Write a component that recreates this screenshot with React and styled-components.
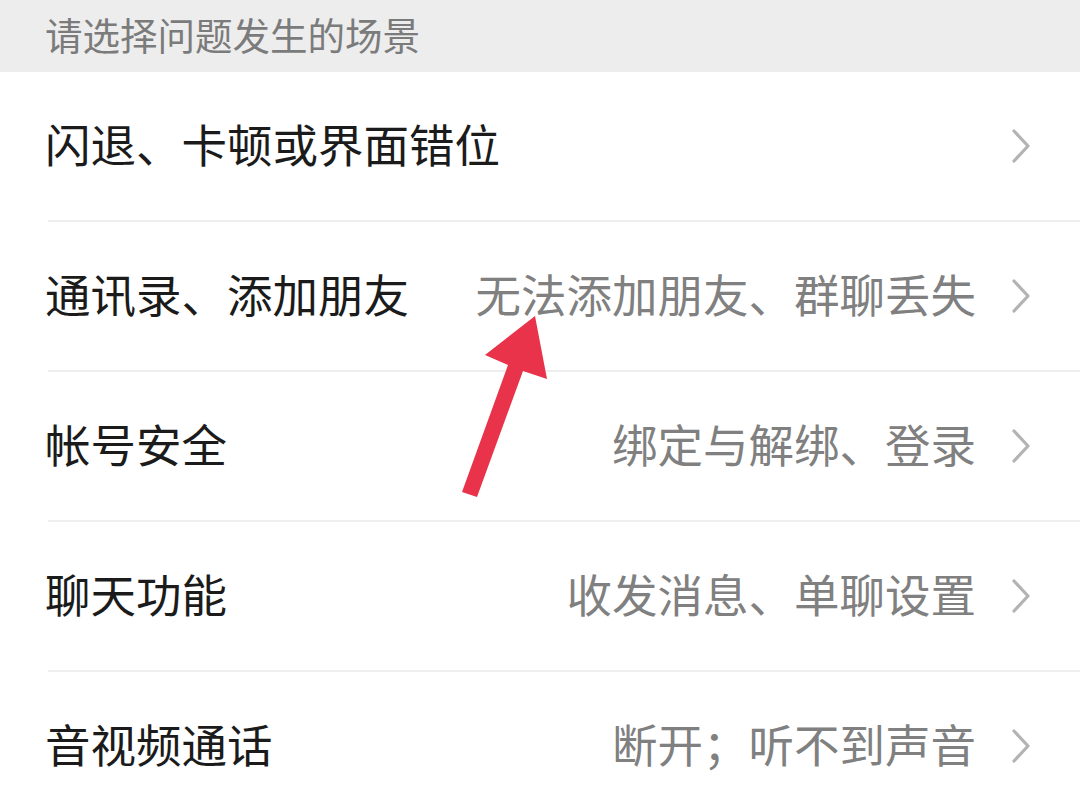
import React from "react";
import styled, { createGlobalStyle } from "styled-components";

const Global = createGlobalStyle`
  html, body { margin: 0; padding: 0; background: #ffffff; overflow: hidden; }
  body { font-family: "Noto Sans CJK SC", "Noto Sans", sans-serif; }
`;

const Page = styled.div`
  position: relative;
  width: 1080px;
  height: 810px;
  overflow: hidden;
  background: #ffffff;
`;

const Header = styled.div`
  height: 72px;
  background: #ededed;
  display: flex;
  align-items: center;
  padding-left: 45px;
  font-size: 37.5px;
  color: #7b7b7b;
  line-height: 1;
  padding-bottom: 4px;
  box-sizing: border-box;
`;

const List = styled.div`
  display: flex;
  flex-direction: column;
`;

const Row = styled.div`
  height: 148px;
  display: flex;
  align-items: center;
  padding: 0 48px 4px 45px;
  box-sizing: border-box;
`;

const Title = styled.span`
  font-size: 45.5px;
  color: #1b1b1b;
  line-height: 1;
  white-space: nowrap;
  flex: 1;
`;

const Detail = styled.span`
  font-size: 45.5px;
  color: #808080;
  line-height: 1;
  white-space: nowrap;
  margin-right: 34px;
`;

const ChevronBox = styled.span`
  display: flex;
  padding-top: 4px;
`;

const Divider = styled.div`
  height: 2px;
  margin-left: 48px;
  background: #efefef;
`;

const Chevron = () => (
  <ChevronBox>
    <svg width="22" height="38" viewBox="0 0 22 38" fill="none">
      <path d="M4 4 L18 19 L4 34" stroke="#b3b3b3" strokeWidth="3.2" strokeLinecap="round" strokeLinejoin="round" />
    </svg>
  </ChevronBox>
);

const ArrowOverlay = styled.svg`
  position: absolute;
  left: 0;
  top: 0;
  pointer-events: none;
`;

const items = [
  { title: "闪退、卡顿或界面错位", detail: "" },
  { title: "通讯录、添加朋友", detail: "无法添加朋友、群聊丢失" },
  { title: "帐号安全", detail: "绑定与解绑、登录" },
  { title: "聊天功能", detail: "收发消息、单聊设置" },
  { title: "音视频通话", detail: "断开；听不到声音" },
];

export default function App() {
  return (
    <>
      <Global />
      <Page>
        <Header>请选择问题发生的场景</Header>
        <List>
          {items.map((it, i) => (
            <React.Fragment key={it.title}>
              {i > 0 && <Divider />}
              <Row>
                <Title>{it.title}</Title>
                {it.detail && <Detail>{it.detail}</Detail>}
                <Chevron />
              </Row>
            </React.Fragment>
          ))}
        </List>
        <ArrowOverlay width="1080" height="810" viewBox="0 0 1080 810">
          <polygon
            points="535,316 547,379 523,371 477,497 462,492 508,365 485,355"
            fill="#e8334a"
          />
        </ArrowOverlay>
      </Page>
    </>
  );
}
